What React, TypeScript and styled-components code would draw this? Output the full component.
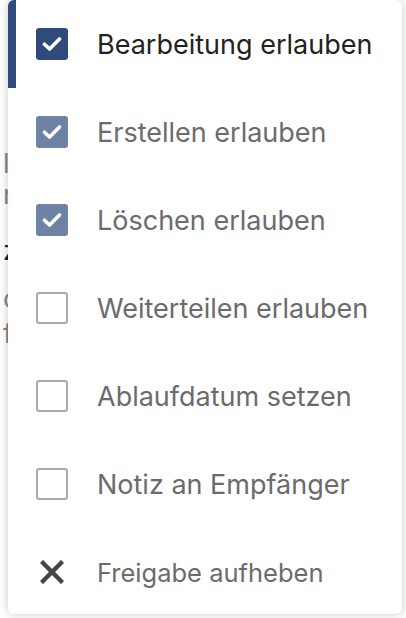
import React from "react";
import styled, { createGlobalStyle } from "styled-components";

const GlobalStyle = createGlobalStyle`
    html, body {
        margin: 0;
        padding: 0;
        background: #ffffff;
        overflow: hidden;
    }
    body {
        font-family: Inter, "Liberation Sans", Arial, sans-serif;
    }
`;

const Page = styled.div`
    position: relative;
    width: 406px;
    height: 618px;
    overflow: hidden;
`;

const BackgroundText = styled.div`
    padding: 148px 0 0 3px;
    font-size: 27px;
    line-height: 31px;
    color: #777;
`;

const BgLine = styled.div<{ $dark?: boolean; $gap?: number }>`
    color: ${(p) => (p.$dark ? "#222" : "#888")};
    margin-top: ${(p) => p.$gap ?? 0}px;
    white-space: nowrap;
`;

const Menu = styled.ul`
    position: absolute;
    top: 0;
    left: 8px;
    width: 394px;
    height: 614px;
    margin: 0;
    padding: 0;
    list-style: none;
    background: #ffffff;
    border-radius: 6px;
    box-shadow: 0 0 10px rgba(0, 0, 0, 0.22);
    overflow: hidden;
`;

const Item = styled.li<{ $active?: boolean; $small?: boolean }>`
    position: relative;
    display: flex;
    align-items: center;
    height: 88px;
    padding-left: 28px;
    gap: 29px;
    font-size: ${(p) => (p.$small ? "25.5px" : "27px")};
    color: ${(p) => (p.$active ? "#222222" : "#6b6b6b")};
    white-space: nowrap;

    &::before {
        content: "";
        display: ${(p) => (p.$active ? "block" : "none")};
        position: absolute;
        left: 0;
        top: 0;
        bottom: 0;
        width: 8px;
        background: #2f4a7b;
    }
`;

const Box = styled.span<{ $checked?: boolean; $strong?: boolean }>`
    flex: none;
    display: flex;
    align-items: center;
    justify-content: center;
    box-sizing: border-box;
    width: 32px;
    height: 32px;
    border-radius: 3px;
    background: ${(p) =>
        p.$checked ? (p.$strong ? "#2f4a7b" : "#6e82a5") : "#ffffff"};
    border: ${(p) => (p.$checked ? "none" : "2px solid #a9a9a9")};
`;

const IconSlot = styled.span`
    flex: none;
    display: flex;
    align-items: center;
    justify-content: center;
    width: 32px;
    height: 32px;
`;

const Check = () => (
    <svg width="20" height="16" viewBox="0 0 20 16">
        <path
            d="M2.5 8.2 L7.6 13 L17.5 3"
            fill="none"
            stroke="#ffffff"
            strokeWidth="3.6"
            strokeLinecap="round"
            strokeLinejoin="round"
        />
    </svg>
);

const Cross = () => (
    <svg width="24" height="24" viewBox="0 0 24 24">
        <path
            d="M3 3 L21 21 M21 3 L3 21"
            stroke="#444444"
            strokeWidth="4.4"
            strokeLinecap="square"
        />
    </svg>
);

type Option = { label: string; checked: boolean };

const options: Option[] = [
    { label: "Bearbeitung erlauben", checked: true },
    { label: "Erstellen erlauben", checked: true },
    { label: "Löschen erlauben", checked: true },
    { label: "Weiterteilen erlauben", checked: false },
    { label: "Ablaufdatum setzen", checked: false },
    { label: "Notiz an Empfänger", checked: false },
];

export default function App() {
    return (
        <Page>
            <GlobalStyle />
            <BackgroundText>
                <BgLine>lorem</BgLine>
                <BgLine>rechte</BgLine>
                <BgLine $dark $gap={25}>zugriff</BgLine>
                <BgLine $gap={17}>cloud</BgLine>
                <BgLine $gap={4}>freigabe</BgLine>
            </BackgroundText>
            <Menu>
                {options.map((o, i) => (
                    <Item key={o.label} $active={i === 0}>
                        <Box $checked={o.checked} $strong={i === 0}>
                            {o.checked && <Check />}
                        </Box>
                        {o.label}
                    </Item>
                ))}
                <Item $small>
                    <IconSlot>
                        <Cross />
                    </IconSlot>
                    Freigabe aufheben
                </Item>
            </Menu>
        </Page>
    );
}
